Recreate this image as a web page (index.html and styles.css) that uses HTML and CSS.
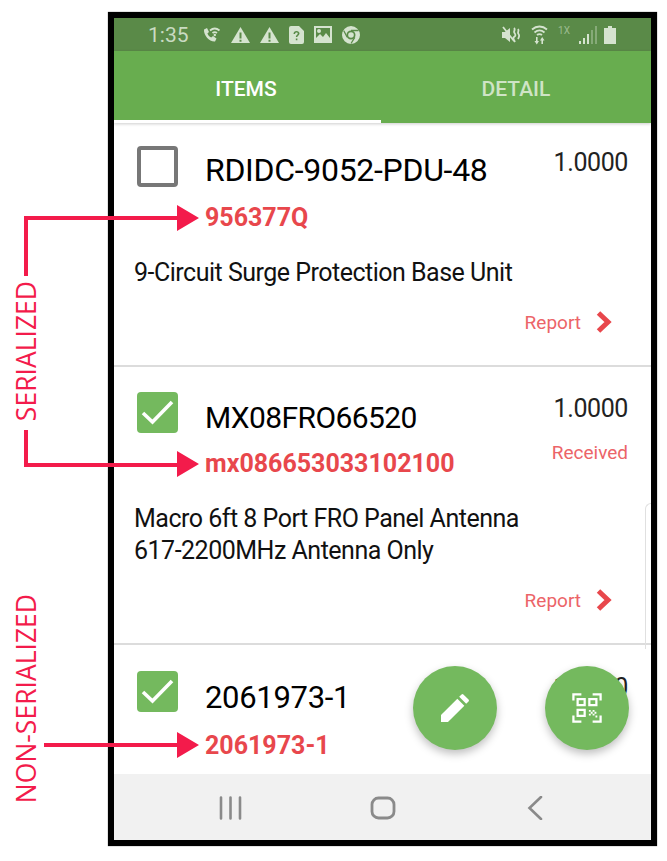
FILE: index.html
```html
<!DOCTYPE html>
<html lang="en">
<head>
  <meta charset="UTF-8">
  <title>Items</title>
  <link rel="stylesheet" href="styles.css">
</head>
<body>

  <div class="phone">
    <div class="status-bar">
      <span class="time">1:35</span>
      <div class="status-left">
        <svg class="st-icon" width="20" height="20" viewBox="0 0 20 20"><path d="M3 4.500 6 3l2 4-1.600 1.400c.8 1.800 2 3.200 3.800 4.200L12 11l3.500 2.500-1.500 3c-5.500.5-11.500-6-11-12z"/><path class="st-line" d="M9 5.500c3-2.500 6.500-2.500 9.500 0M11.500 8c1.500-1.200 3-1.200 4.500 0"/><circle cx="13.800" cy="10" r="1.200"/></svg>
        <svg class="st-icon" width="19" height="18" viewBox="0 0 19 18"><path fill-rule="evenodd" d="M9.500 1 19 17H0zM8.500 6.500v6h2v-6zm0 7.300v2h2v-2z"/></svg>
        <svg class="st-icon" width="19" height="18" viewBox="0 0 19 18"><path fill-rule="evenodd" d="M9.500 1 19 17H0zM8.500 6.500v6h2v-6zm0 7.300v2h2v-2z"/></svg>
        <svg class="st-icon" width="15" height="18" viewBox="0 0 15 18"><path fill-rule="evenodd" d="M2 0h8l5 5v11a2 2 0 0 1-2 2H2a2 2 0 0 1-2-2V2a2 2 0 0 1 2-2zM4.500 8h1.600c0-1 .6-1.500 1.400-1.500s1.300.5 1.300 1.100c0 1.200-2 1.400-2 3.400h1.600c0-1.400 2.100-1.700 2.100-3.500C10.500 6 9.200 5 7.500 5S4.500 6.200 4.500 8zm2.300 4.500v1.700h1.600v-1.700z"/></svg>
        <svg class="st-icon" width="18" height="17" viewBox="0 0 18 17"><path fill-rule="evenodd" d="M0 0h18v17H0zM2 2v10l4-4 3 3 3-4 4 5V2zm3 1a2 2 0 1 1 0 4 2 2 0 0 1 0-4z"/></svg>
        <svg class="st-icon" width="18" height="18" viewBox="0 0 18 18"><path fill-rule="evenodd" d="M9 0a9 9 0 1 1 0 18A9 9 0 0 1 9 0zm0 4.500a4.500 4.500 0 1 0 0 9 4.500 4.500 0 0 0 0-9z"/><circle cx="9" cy="9" r="2.800"/><path class="st-cut" d="M9 4.500h7.500M5.200 11.200 1.800 4.800M12.800 11.300 9 17.500"/></svg>
      </div>
      <div class="status-right">
        <svg class="st-icon" width="19" height="18" viewBox="0 0 19 18"><path d="M0 6h3l5-4v14l-5-4H0z"/><path class="st-line" d="M1 1l11 14M12 2c2 2-1 3 .5 5s1 3-.5 4 0 3 1 5M16 3c1.500 2-1 3 .5 5s.5 3-.5 5"/></svg>
        <svg class="st-icon" width="17" height="21" viewBox="0 0 17 21"><path class="st-line" d="M1 5.500c4.500-4 10.500-4 15 0M3.500 8.500c3-2.500 7-2.500 10 0M6 11c1.600-1.200 3.400-1.200 5 0"/><path d="M5 13h1.600v4H8l-2.200 3.500L3.500 17H5zM12 20h-1.600v-3.500H9l2.200-3.500 2.300 3.500H12z"/></svg>
        <span class="net">1X</span>
        <svg class="st-signal" width="18" height="18" viewBox="0 0 18 18"><path class="sig-on" d="M0 15h2v3H0zM4 12h2v6H4zM8 8h2v10H8z"/><path class="sig-off" d="M12 4h2v14h-2zM16 0h2v18h-2z"/></svg>
        <svg class="st-battery" width="12" height="18" viewBox="0 0 12 18"><path d="M4 0h4v2h4v16H0V2h4z"/></svg>
      </div>
    </div>

    <div class="tabs">
      <div class="tab active">ITEMS</div>
      <div class="tab">DETAIL</div>
    </div>

    <div class="list">
      <div class="item item-first">
        <div class="item-head">
          <span class="check"></span>
          <div class="item-ids">
            <div class="part">RDIDC-9052-PDU-48</div>
            <div class="serial">956377Q</div>
          </div>
          <div class="item-qty">
            <div class="qty">1.0000</div>
          </div>
        </div>
        <p class="desc">9-Circuit Surge Protection Base Unit</p>
        <div class="report">Report
          <svg width="18" height="24" viewBox="0 0 18 24"><path d="M3.500 3 13 12l-9.500 9" fill="none" stroke="#e8474c" stroke-width="5"/></svg>
        </div>
      </div>

      <div class="item item-second">
        <div class="item-head">
          <span class="check checked">
            <svg width="41" height="41" viewBox="0 0 41 41"><path d="M6 21l9.500 9L35 10" fill="none" stroke="#fff" stroke-width="3.600"/></svg>
          </span>
          <div class="item-ids">
            <div class="part">MX08FRO66520</div>
            <div class="serial">mx086653033102100</div>
          </div>
          <div class="item-qty">
            <div class="qty">1.0000</div>
            <div class="received">Received</div>
          </div>
        </div>
        <p class="desc">Macro 6ft 8 Port FRO Panel Antenna<br>617-2200MHz Antenna Only</p>
        <div class="report">Report
          <svg width="18" height="24" viewBox="0 0 18 24"><path d="M3.500 3 13 12l-9.500 9" fill="none" stroke="#e8474c" stroke-width="5"/></svg>
        </div>
        <div class="card-edge"></div>
      </div>

      <div class="item item-third">
        <div class="item-head">
          <span class="check checked">
            <svg width="41" height="41" viewBox="0 0 41 41"><path d="M6 21l9.500 9L35 10" fill="none" stroke="#fff" stroke-width="3.600"/></svg>
          </span>
          <div class="item-ids">
            <div class="part">2061973-1</div>
            <div class="serial">2061973-1</div>
          </div>
          <div class="item-qty">
            <div class="qty">1.0000</div>
          </div>
        </div>
      </div>

      <button class="fab fab-edit">
        <svg width="28" height="28" viewBox="0 0 30 30"><path d="M0 30v-7.500L17.500 5 25 12.500 7.500 30zM19.500 3l2.500-2.500a1.500 1.500 0 0 1 2 0L29.500 6a1.500 1.500 0 0 1 0 2L27 10.500z" fill="#fff"/></svg>
      </button>
      <button class="fab fab-scan">
        <svg width="30" height="30" viewBox="0 0 32 32"><g fill="none" stroke="#fff" stroke-width="2.400"><path d="M1.500 8V1.500H10M22 1.500h8.500V8M1.500 24v6.500H10M30.500 24v6.500H22"/><path d="M6 6.500h7.500V13H6zM18.500 6.500H26V13h-7.500zM6 18h7.500v6.500H6z"/></g><path d="M18 18h2v2h-2zM22 18h2v2h-2zM20 20h2v2h-2zM24 20h2v2h-2zM18 22h2v2h-2zM22 22h2v2h-2zM25 24h2v2h-2z" fill="#fff"/></svg>
      </button>
    </div>

    <div class="nav-bar">
      <svg width="26" height="24" viewBox="0 0 26 24"><path d="M3 1.500v21M12.500 1.500v21M22 1.500v21" fill="none" stroke="#8a8a8a" stroke-width="2.600" stroke-linecap="round"/></svg>
      <svg width="26" height="24" viewBox="0 0 26 24"><rect x="2" y="2" width="22" height="20" rx="6.500" fill="none" stroke="#8a8a8a" stroke-width="2.800"/></svg>
      <svg width="26" height="24" viewBox="0 0 26 24"><path d="M19 1 7.500 12 19 23" fill="none" stroke="#8a8a8a" stroke-width="2.600" stroke-linecap="round"/></svg>
    </div>
  </div>

  <!-- annotations drawn over the screenshot -->
  <svg class="notes" width="667" height="861" viewBox="0 0 667 861">
    <path d="M26 276V218H180M26 430V465H180M44 745H180" fill="none" stroke="#f31b4b" stroke-width="4"/>
    <path d="M177 205l22 13-22 13zM177 451l22 13-22 13zM177 732l22 13-22 13z" fill="#f31b4b"/>
  </svg>
  <div class="note note-serial">SERIALIZED</div>
  <div class="note note-non">NON-SERIALIZED</div>

</body>
</html>
```

FILE: styles.css
```css
html, body {
  margin: 0;
  height: 861px;
  overflow: hidden;
  background: #fff;
}
body {
  padding: 12px 0 0 108px;
  box-sizing: border-box;
  font-family: Roboto, sans-serif;
}
.phone {
  width: 549px;
  height: 834px;
  box-sizing: border-box;
  border: 6px solid #000;
  box-shadow: 0 0 1px #555;
  display: flex;
  flex-direction: column;
  background: #fff;
}

/* status bar */
.status-bar {
  height: 33px;
  flex: none;
  background: #5a8a48;
  display: flex;
  align-items: center;
  padding: 0 35px 0 34px;
  color: #c9dbc2;
}
.time {
  font-size: 21px;
  width: 53px;
}
.status-left {
  display: flex;
  align-items: center;
  gap: 10px;
  flex: 1;
}
.status-right {
  display: flex;
  align-items: center;
  gap: 10px;
}
.st-icon {
  fill: #d5e3cf;
}
.st-line {
  fill: none;
  stroke: #d5e3cf;
  stroke-width: 1.800;
}
.st-cut {
  fill: none;
  stroke: #5a8a48;
  stroke-width: 1.300;
}
.net {
  font-size: 10px;
  color: #9cbb8f;
  margin-bottom: 8px;
}
.st-signal {
  margin-left: -1px;
  margin-right: -3px;
}
.sig-on {
  fill: #d5e3cf;
}
.sig-off {
  fill: #86aa78;
}
.st-battery {
  fill: #d5e3cf;
}

/* tabs */
.tabs {
  height: 72px;
  flex: none;
  display: flex;
  background: #68ad4f;
  box-shadow: 0 1px 3px rgba(0,0,0,0.2);
  position: relative;
}
.tab {
  flex: 1;
  display: flex;
  align-items: center;
  justify-content: center;
  box-sizing: border-box;
  padding-top: 3px;
  font-size: 21px;
  font-weight: 500;
  color: #cfe4c6;
}
.tab.active {
  flex: none;
  width: 267px;
  color: #fff;
  border-bottom: 3px solid #fff;
  padding: 6px 3px 0 0;
}

/* list */
.list {
  flex: 1;
  min-height: 0;
  position: relative;
  overflow: hidden;
}
.item {
  position: relative;
  box-sizing: border-box;
  padding: 0 22px 0 23px;
}
.item-first {
  height: 244px;
  padding-top: 23px;
  border-bottom: 2px solid #dcdcdc;
}
.item-second {
  height: 278px;
  padding-top: 25px;
  border-bottom: 2px solid #dcdcdc;
}
.item-third {
  padding-top: 26px;
}
.item-head {
  display: flex;
}
.check {
  flex: none;
  width: 41px;
  height: 41px;
  box-sizing: border-box;
  border: 4px solid #777;
  border-radius: 4px;
}
.check.checked {
  border: none;
  background: #74b95e;
}
.check svg {
  display: block;
}
.item-ids {
  flex: 1;
  padding-left: 27px;
}
.part {
  font-size: 32px;
  letter-spacing: -0.3px;
  line-height: 42px;
  margin-top: 3px;
  color: #000;
}
.serial {
  font-size: 25px;
  line-height: 30px;
  margin-top: 12px;
  font-weight: 700;
  color: #e8474c;
}
.item-second .part {
  font-size: 30px;
  letter-spacing: -0.6px;
  margin-top: 5px;
}
.item-second .serial {
  margin-top: 10px;
}
.item-third .part {
  font-size: 31px;
  margin-top: 6px;
}
.item-qty {
  text-align: right;
  margin-right: 1px;
}
.qty {
  font-size: 25px;
  letter-spacing: -0.4px;
  line-height: 30px;
  margin-top: 2px;
  color: #222;
}
.received {
  font-size: 19px;
  line-height: 24px;
  margin-top: 17px;
  color: #ec6468;
}
.desc {
  margin: 24px 0 0 -3px;
  font-size: 25px;
  letter-spacing: -0.5px;
  line-height: 32px;
  color: #111;
}
.report {
  display: flex;
  justify-content: flex-end;
  align-items: center;
  gap: 14px;
  margin-top: 21px;
  padding-right: 16px;
  font-size: 19px;
  color: #ec6468;
}
.card-edge {
  position: absolute;
  right: 0;
  top: 136px;
  width: 5px;
  height: 145px;
  border: solid #e0e0e0;
  border-width: 1px 0 0 1px;
  border-top-left-radius: 8px;
}

/* floating buttons */
.fab {
  position: absolute;
  top: 543px;
  width: 84px;
  height: 84px;
  padding: 0;
  border: none;
  border-radius: 50%;
  background: #74b95e;
  box-shadow: 0 4px 8px rgba(0,0,0,0.25);
  display: flex;
  align-items: center;
  justify-content: center;
}
.fab-edit {
  left: 299px;
}
.fab-scan {
  left: 431px;
}

/* nav bar */
.nav-bar {
  height: 66px;
  flex: none;
  background: #f1f1f1;
  display: flex;
  align-items: center;
  justify-content: space-between;
  padding: 2px 103px 0 104px;
  box-sizing: border-box;
}

/* annotations */
.notes {
  position: absolute;
  left: 0;
  top: 0;
  pointer-events: none;
}
.note {
  position: absolute;
  writing-mode: vertical-rl;
  transform: rotate(180deg);
  font-family: "Open Sans", sans-serif;
  font-size: 26.500px;
  line-height: 26px;
  color: #f31b4b;
}
.note-serial {
  left: 13px;
  top: 281px;
}
.note-non {
  left: 13px;
  top: 594px;
}
```
